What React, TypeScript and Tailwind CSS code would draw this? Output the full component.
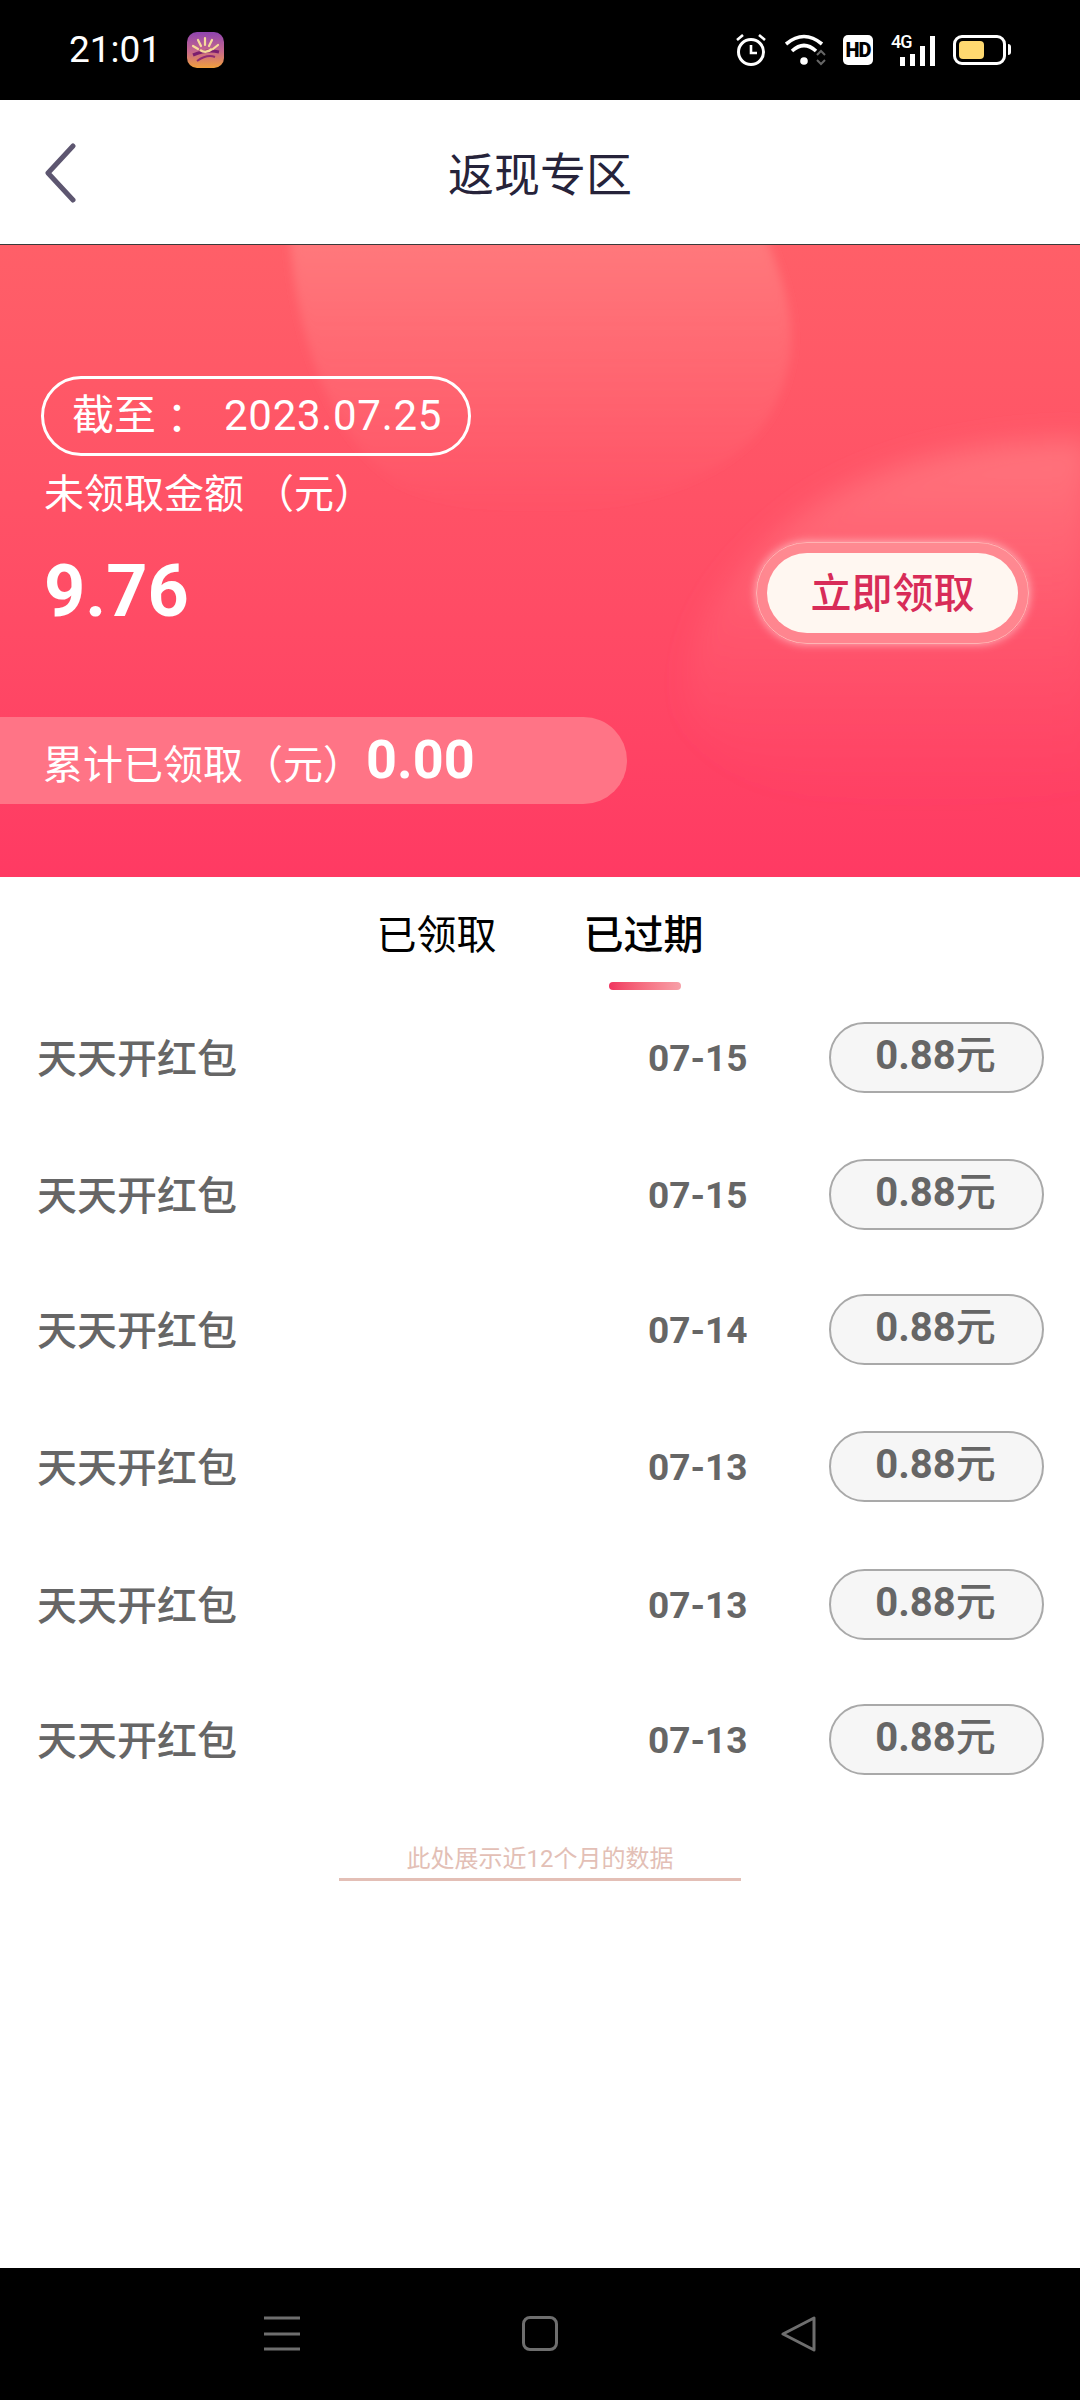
const rows = [
  { date: "07-15", gap: "mt-[32px]" },
  { date: "07-15", gap: "mt-[67px]" },
  { date: "07-14", gap: "mt-[65px]" },
  { date: "07-13", gap: "mt-[67px]" },
  { date: "07-13", gap: "mt-[68px]" },
  { date: "07-13", gap: "mt-[65px]" },
];

function StatusBar() {
  return (
    <div className="flex h-[100px] shrink-0 items-center justify-between bg-black pb-[1px] pl-[69px] pr-[69px] text-white">
      <div className="flex items-center gap-[26px]">
        <span className="text-[37px] leading-none">21:01</span>
        <svg width="37" height="36" viewBox="0 0 37 36">
          <defs>
            <linearGradient id="app" x1="0" y1="0" x2="0" y2="1">
              <stop offset="0" stopColor="#8f44b0" />
              <stop offset="0.55" stopColor="#c8698a" />
              <stop offset="1" stopColor="#f0a03c" />
            </linearGradient>
          </defs>
          <rect width="37" height="36" rx="10" fill="url(#app)" />
          <path d="M6 23 Q20 17 32 20" stroke="#7b1f6e" strokeWidth="3" fill="none" />
          <path d="M10 29 Q20 22 28 25" stroke="#8f2a74" strokeWidth="2" fill="none" />
          <path d="M18 6v7M11 8l3 6M25 8l-3 6M6 14l5 3M31 13l-5 4" stroke="#f7dc9a" strokeWidth="2.2" strokeLinecap="round" />
          <path d="M13 18 Q19 22 25 17" stroke="#f7dc9a" strokeWidth="2.5" fill="none" />
        </svg>
      </div>
      <div className="flex items-center">
        <svg width="30" height="32" viewBox="0 0 30 32" fill="none" stroke="white" strokeWidth="3">
          <circle cx="15" cy="18" r="12.5" />
          <path d="M15 11v8h6" strokeWidth="2.6" />
          <path d="M1 6l6-5M29 6l-6-5" strokeWidth="2.6" />
        </svg>
        <svg className="ml-[19px]" width="42" height="32" viewBox="0 0 42 32" fill="none">
          <path d="M1 10 Q19 -5 37 10" stroke="white" strokeWidth="3.6" />
          <path d="M7 17 Q19 6 31 17" stroke="white" strokeWidth="3.6" />
          <circle cx="19" cy="27" r="3.8" fill="white" />
          <path d="M32 21l4-4 4 4M32 26l4 4 4-4" stroke="#666" strokeWidth="2" />
        </svg>
        <div className="ml-[16px] flex h-[30px] w-[30px] items-center justify-center rounded-[5px] bg-white font-['Roboto'] text-[20px] leading-none font-black tracking-[-1px] text-black">
          HD
        </div>
        <div className="relative ml-[18px] h-[32px] w-[44px]">
          <span className="absolute left-0 top-[-1px] font-['Roboto'] text-[18px] leading-none font-medium tracking-[-1px]">4G</span>
          <div className="absolute bottom-0 right-0 flex items-end gap-[5px]">
            <div className="h-[9px] w-[5px] bg-white" />
            <div className="h-[12px] w-[5px] bg-white" />
            <div className="h-[20px] w-[5px] bg-white" />
            <div className="h-[30px] w-[5px] bg-white" />
          </div>
        </div>
        <div className="ml-[18px] flex items-center">
          <div className="h-[30px] w-[53px] rounded-[9px] border-[3px] border-white p-[3px]">
            <div className="h-full w-[25px] rounded-[4px] bg-[#ffd970]" />
          </div>
          <div className="ml-[2px] h-[11px] w-[3px] rounded-r-sm bg-white" />
        </div>
      </div>
    </div>
  );
}

function Header() {
  return (
    <div className="relative flex h-[145px] shrink-0 items-center justify-center border-b border-[#3a3a3a] bg-white">
      <svg className="absolute left-[43px] top-[43px]" width="34" height="60" viewBox="0 0 34 60" fill="none">
        <path d="M30 3 L5 30 L30 57" stroke="#5d5670" strokeWidth="5" strokeLinecap="round" strokeLinejoin="round" />
      </svg>
      <span className="pt-[6px] text-[46px] text-[#26233a]">返现专区</span>
    </div>
  );
}

function Hero() {
  return (
    <div className="relative h-[632px] shrink-0 overflow-hidden bg-gradient-to-b from-[#ff5f68] to-[#ff3a63] pt-[131px] text-white">
      <svg className="absolute inset-0" width="1080" height="632" viewBox="0 0 1080 632">
        <defs>
          <filter id="soft" x="-20%" y="-20%" width="140%" height="140%">
            <feGaussianBlur stdDeviation="5" />
          </filter>
          <filter id="softer" x="-30%" y="-30%" width="160%" height="160%">
            <feGaussianBlur stdDeviation="14" />
          </filter>
          <linearGradient id="blobA" x1="0" y1="0" x2="0" y2="1">
            <stop offset="0" stopColor="#ff8a8a" stopOpacity="0.6" />
            <stop offset="0.55" stopColor="#ff8084" stopOpacity="0.3" />
            <stop offset="1" stopColor="#ff7a80" stopOpacity="0" />
          </linearGradient>
          <linearGradient id="blobB" x1="0" y1="0" x2="0" y2="1">
            <stop offset="0" stopColor="#ff8a8c" stopOpacity="0.6" />
            <stop offset="0.45" stopColor="#ff7a84" stopOpacity="0.3" />
            <stop offset="1" stopColor="#ff5a70" stopOpacity="0" />
          </linearGradient>
        </defs>
        <path d="M290 -10 C295 80 325 190 400 240 C520 300 720 260 770 170 C810 100 785 40 765 -10 Z" fill="url(#blobA)" filter="url(#soft)" />
        <path d="M1090 195 C960 195 850 225 780 285 C710 345 680 400 690 470 C760 590 980 570 1090 540 Z" fill="url(#blobB)" filter="url(#softer)" />
      </svg>

      <div className="relative flex flex-col items-start">
        <div className="ml-[41px] flex h-[80px] w-[430px] items-center rounded-full border-[3px] border-white pl-[28px] text-[42px] leading-none">
          <span>截至</span>
          <span className="font-['Noto_Sans_CJK_TC']">：</span>
          <span className="ml-[26px] tracking-[0.7px]">2023.07.25</span>
        </div>
        <div className="ml-[44px] mt-[9px] text-[40px] leading-[60px]">未领取金额 （元）</div>
        <div className="mt-[17px] flex w-full items-center justify-between pl-[44px] pr-[51px]">
          <span className="-translate-y-[1px] text-[72px] leading-[96px] font-bold">9.76</span>
          <div className="rounded-full border border-[#ffb4b4] bg-[#ff9a9e]/70 p-[10px] shadow-[0_0_10px_rgba(255,225,225,0.7)]">
            <div className="flex h-[80px] w-[251px] items-center justify-center rounded-full bg-[#fff7f1] pt-[4px] text-[41px] font-medium text-[#d82c58]">
              立即领取
            </div>
          </div>
        </div>
        <div className="mt-[73px] flex h-[87px] w-[627px] items-center rounded-r-[44px] bg-[#ff7486] pl-[43px]">
          <span className="translate-y-[5px] text-[40px]">累计已领取（元）</span>
          <span className="ml-[3px] -translate-y-[1px] text-[54px] leading-none font-bold">0.00</span>
        </div>
      </div>
    </div>
  );
}

function Tabs() {
  return (
    <div className="relative flex h-[113px] shrink-0 items-start justify-center gap-[87px] bg-white pt-[31px] text-[40px] leading-[56px] text-black">
      <span>已领取</span>
      <span className="relative font-medium">
        已过期
        <div className="absolute left-[25px] top-[74px] h-[8px] w-[72px] rounded-full bg-gradient-to-r from-[#f0335f] to-[#f7a0a8]" />
      </span>
    </div>
  );
}

function Row({ date, gap }: { date: string; gap: string }) {
  return (
    <div className={`flex h-[70px] items-center pl-[37px] pr-[36px] ${gap}`}>
      <span className="w-[611px] pt-[6px] text-[40px] font-medium text-[#666666]">天天开红包</span>
      <span className="w-[181px] pt-[3px] text-[37px] font-bold text-[#666666]">{date}</span>
      <div className="flex h-[71px] w-[215px] items-center justify-center rounded-full border-2 border-[#a9a9a9] bg-[#f6f6f6] pb-[3px] pr-[2px] text-[40px] font-bold text-[#666666]">
        0.88<span className="font-medium">元</span>
      </div>
    </div>
  );
}

function NavBar() {
  return (
    <div className="flex h-[132px] shrink-0 items-center bg-black pb-[1px] pl-[264px]">
      <svg width="36" height="36" viewBox="0 0 36 36" stroke="#6e6e6e" strokeWidth="3">
        <path d="M0 2h36M0 18h36M0 33h36" />
      </svg>
      <div className="ml-[222px] h-[35px] w-[36px] rounded-[8px] border-[3px] border-[#6e6e6e]" />
      <svg className="ml-[223px]" width="36" height="36" viewBox="0 0 36 36" fill="none" stroke="#6e6e6e" strokeWidth="3" strokeLinejoin="round">
        <path d="M2 18 L33 2 L33 34 Z" />
      </svg>
    </div>
  );
}

export default function App() {
  return (
    <div className="flex h-[2400px] w-[1080px] flex-col overflow-hidden bg-white font-['Roboto','Noto_Sans_CJK_SC',sans-serif]">
      <StatusBar />
      <Header />
      <Hero />
      <Tabs />
      <div className="flex-1">
        {rows.map((row, i) => (
          <Row key={i} date={row.date} gap={row.gap} />
        ))}
        <div className="mt-[67px] flex flex-col items-center">
          <span className="text-[24px] leading-[36px] text-[#e3bfb6]">此处展示近12个月的数据</span>
          <div className="mt-[1px] h-[3px] w-[402px] bg-[#e3bfb6]" />
        </div>
      </div>
      <NavBar />
    </div>
  );
}
